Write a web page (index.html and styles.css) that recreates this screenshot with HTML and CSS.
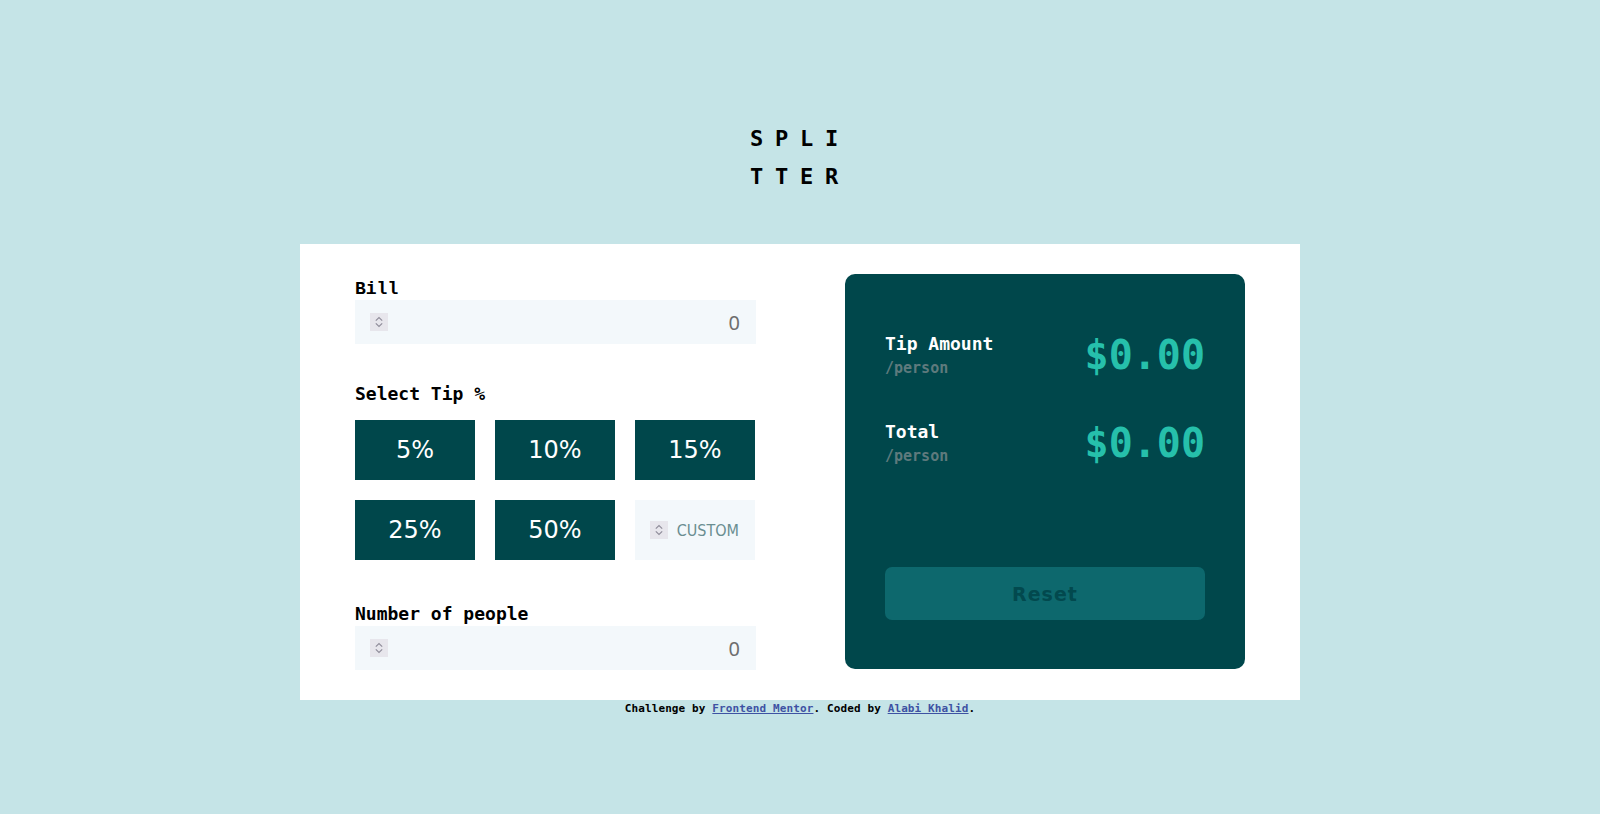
FILE: index.html
```html
<!DOCTYPE html>
<html lang="en">
<head>
<meta charset="utf-8">
<title>Splitter</title>
<link rel="stylesheet" href="styles.css">
</head>
<body>
<main class="page">
  <h1 class="logo">SPLITTER</h1>
  <section class="card">
    <form class="inputs">
      <label class="label label-bill" for="bill">Bill</label>
      <div class="field">
        <svg class="spin" viewBox="0 0 18 18" aria-hidden="true"><rect width="18" height="18" fill="#e7e6ec"/><path d="M5.8 7.6 L9 4.6 L12.2 7.6 M5.8 10.4 L9 13.4 L12.2 10.4" fill="none" stroke="#8f8d9a" stroke-width="1.2"/></svg>
        <input class="num" id="bill" type="number" dir="rtl" placeholder="0">
      </div>

      <p class="label label-tip">Select Tip %</p>
      <div class="tips">
        <button type="button" class="tip">5%</button>
        <button type="button" class="tip">10%</button>
        <button type="button" class="tip">15%</button>
        <button type="button" class="tip">25%</button>
        <button type="button" class="tip">50%</button>
        <div class="field custom">
          <svg class="spin" viewBox="0 0 18 18" aria-hidden="true"><rect width="18" height="18" fill="#e7e6ec"/><path d="M5.8 7.6 L9 4.6 L12.2 7.6 M5.8 10.4 L9 13.4 L12.2 10.4" fill="none" stroke="#8f8d9a" stroke-width="1.2"/></svg>
          <input class="num num-custom" type="number" dir="rtl" placeholder="CUSTOM">
        </div>
      </div>

      <label class="label label-people" for="people">Number of people</label>
      <div class="field">
        <svg class="spin" viewBox="0 0 18 18" aria-hidden="true"><rect width="18" height="18" fill="#e7e6ec"/><path d="M5.8 7.6 L9 4.6 L12.2 7.6 M5.8 10.4 L9 13.4 L12.2 10.4" fill="none" stroke="#8f8d9a" stroke-width="1.2"/></svg>
        <input class="num" id="people" type="number" dir="rtl" placeholder="0">
      </div>
    </form>

    <div class="panel">
      <div class="row">
        <div class="row-text">
          <p class="row-title">Tip Amount</p>
          <p class="row-sub">/person</p>
        </div>
        <p class="amount">$0.00</p>
      </div>
      <div class="row row-total">
        <div class="row-text">
          <p class="row-title">Total</p>
          <p class="row-sub">/person</p>
        </div>
        <p class="amount">$0.00</p>
      </div>
      <button type="button" class="reset">Reset</button>
    </div>
  </section>
  <footer class="attribution">
    Challenge by <a href="#">Frontend Mentor</a>. Coded by <a href="#">Alabi Khalid</a>.
  </footer>
</main>
</body>
</html>
```

FILE: styles.css
```css
* {
  box-sizing: border-box;
}

body {
  margin: 0;
  background: #c5e4e7;
  font-family: "DejaVu Sans Mono", monospace;
  color: #000;
}

p {
  margin: 0;
}

.page {
  display: flex;
  flex-direction: column;
  align-items: center;
  padding-top: 120px;
}

.logo {
  margin: 0 0 48px;
  width: 110px;
  font-family: "DejaVu Sans Mono", monospace;
  font-size: 22px;
  font-weight: 700;
  line-height: 38px;
  letter-spacing: 11.8px;
  text-align: center;
  word-break: break-all;
}

.card {
  width: 1000px;
  background: #fff;
  padding: 30px 55px 30px;
  display: flex;
  justify-content: space-between;
  align-items: flex-start;
}

.inputs {
  width: 401px;
  display: flex;
  flex-direction: column;
  padding-top: 5px;
  margin: 0;
}

.label {
  display: block;
  font-size: 18px;
  font-weight: 700;
  line-height: 20px;
}

.label-bill {
  font-family: "Liberation Mono", "Courier New", monospace;
  margin-bottom: 1px;
}

.label-tip {
  margin-top: 40px;
  margin-bottom: 16px;
}

.label-people {
  margin-top: 44px;
  margin-bottom: 2px;
}

.field {
  display: flex;
  align-items: center;
  gap: 8px;
  width: 100%;
  height: 44px;
  background: #f3f8fb;
  padding: 0 16px 0 15px;
}

.spin {
  flex: none;
  width: 18px;
  height: 18px;
  display: block;
}

.num {
  flex: 1;
  min-width: 0;
  height: 100%;
  border: none;
  background: transparent;
  padding: 0;
  font-family: "Noto Sans", "DejaVu Sans", sans-serif;
  font-size: 20px;
  color: #6e6e6e;
  outline: none;
  -moz-appearance: textfield;
}

.num::-webkit-inner-spin-button,
.num::-webkit-outer-spin-button {
  -webkit-appearance: none;
  margin: 0;
}

.num::placeholder {
  color: #6e6e6e;
  opacity: 1;
}

.tips {
  display: grid;
  grid-template-columns: repeat(3, 120px);
  grid-auto-rows: 60px;
  gap: 20px;
}

.tip {
  border: none;
  background: #00474b;
  color: #fff;
  font-family: "DejaVu Sans", sans-serif;
  font-size: 24px;
  padding: 0;
  cursor: pointer;
}

.custom {
  height: 60px;
}

.num-custom {
  font-family: "DejaVu Sans Condensed", "DejaVu Sans", sans-serif;
  font-size: 16px;
}

.num-custom::placeholder {
  color: #6a8e91;
}

.panel {
  width: 400px;
  height: 395px;
  background: #00474b;
  border-radius: 10px;
  padding: 60px 40px 49px;
  display: flex;
  flex-direction: column;
}

.row {
  display: flex;
  justify-content: space-between;
  align-items: flex-start;
}

.row-total {
  margin-top: 45px;
}

.row-title {
  color: #fff;
  font-size: 18px;
  font-weight: 700;
  line-height: 20px;
}

.row-sub {
  margin-top: 5px;
  color: #5e7a7d;
  font-size: 15px;
  font-weight: 700;
  line-height: 18px;
}

.amount {
  margin-top: 1px;
  color: #26c0ab;
  font-size: 40px;
  font-weight: 700;
  line-height: 40px;
}

.reset {
  margin-top: auto;
  height: 53px;
  width: 100%;
  border: none;
  border-radius: 7px;
  background: #0d686d;
  color: #02494e;
  font-family: "DejaVu Sans", sans-serif;
  font-size: 19px;
  font-weight: 700;
  letter-spacing: 1px;
}

.attribution {
  padding-top: 1px;
  font-size: 11px;
  font-weight: 700;
  line-height: 16px;
  letter-spacing: 0.12px;
  text-align: center;
}

.attribution a {
  color: #3e52a3;
}
```
